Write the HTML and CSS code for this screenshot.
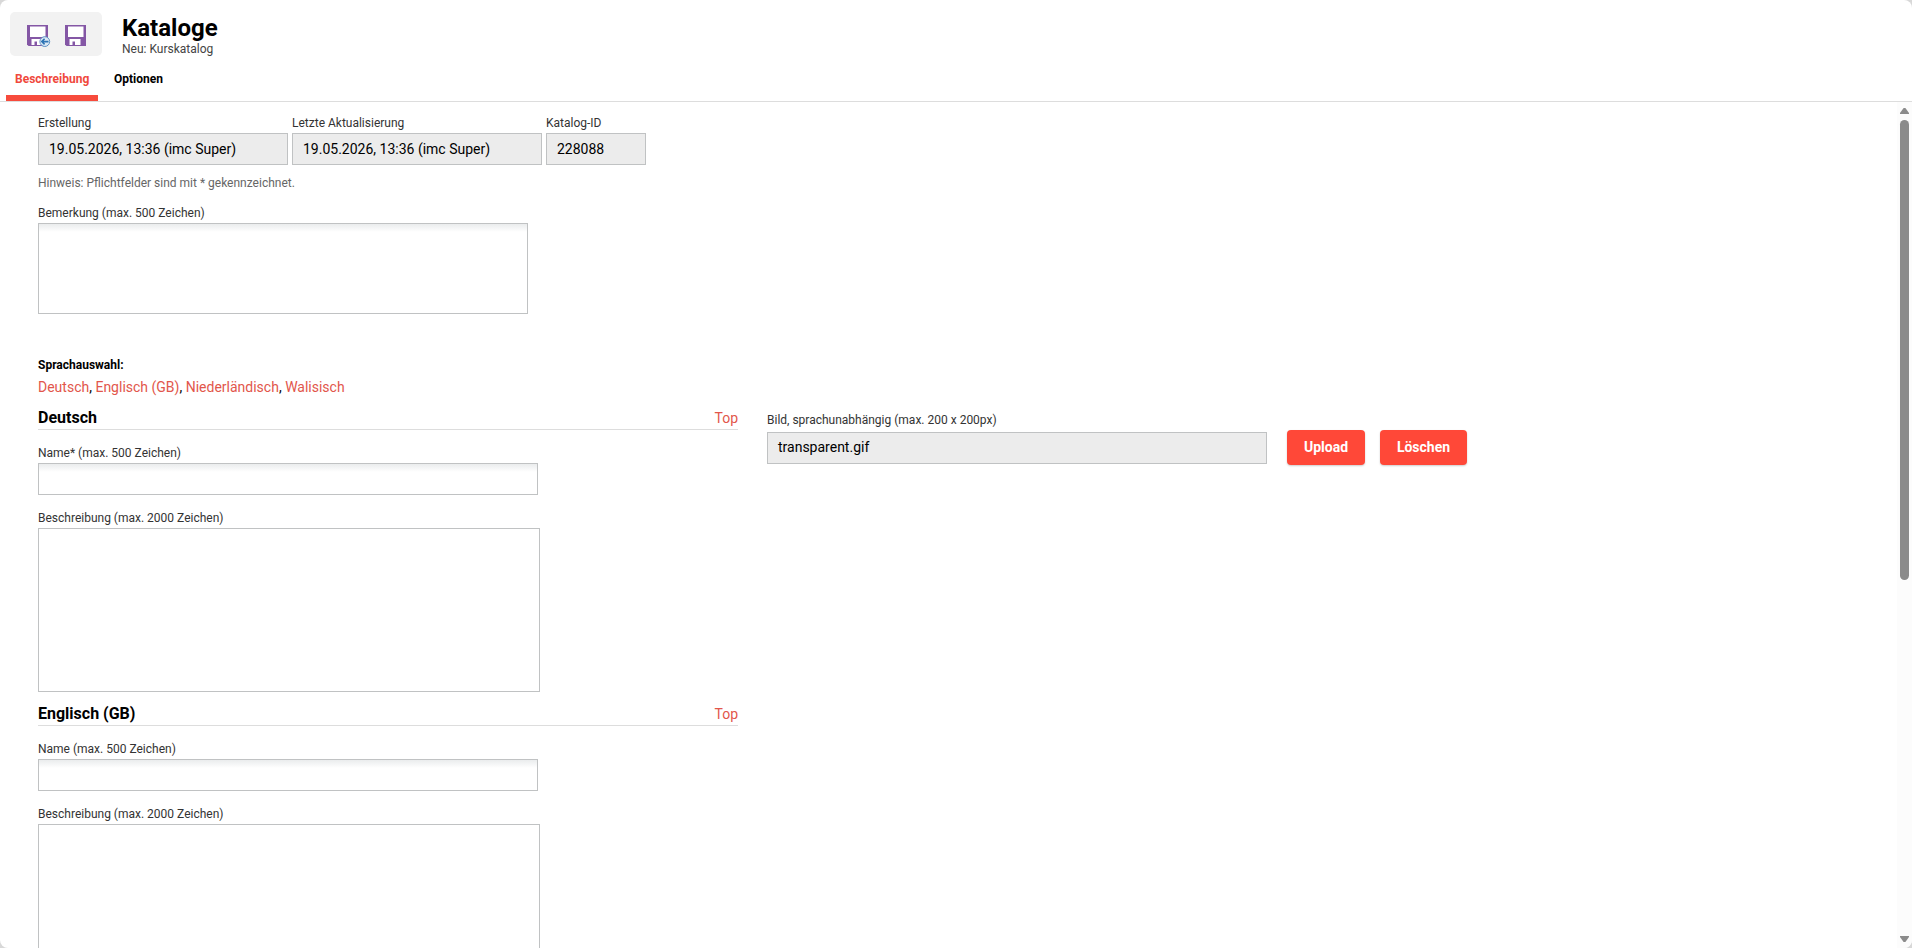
FILE: index.html
```
<!DOCTYPE html>
<html lang="de">
<head>
  <meta charset="utf-8">
  <title>Kataloge</title>
  <link rel="stylesheet" href="styles.css">
</head>

<body>
<div class="window">
  <header class="header">
    <div class="toolbar">
      <svg class="icon" width="25" height="24" viewBox="0 0 25 24">
        <path fill="#8457a5" d="M0 0H21V21H1.5L0 19.5Z"/>
        <path fill="#fff" d="M3 1.5H18.5V12H3ZM4.5 14H15V20H10V16.5H7.5V20H4.5Z"/>
        <circle cx="17.8" cy="16.6" r="4.9" fill="#dbe8f4" stroke="#5f94c6"/>
        <path fill="none" stroke="#2f75b5" stroke-width="1.6" d="M21.5 16.6H15M17.6 13.8L14.8 16.6L17.6 19.4"/>
      </svg>
      <svg class="icon" width="21" height="24" viewBox="0 0 21 24">
        <path fill="#8457a5" d="M0 0H21V21H1.5L0 19.5Z"/>
        <path fill="#fff" d="M3 1.5H18.5V12H3ZM4.5 14H15.5V20H10V16.5H7.5V20H4.5Z"/>
      </svg>
    </div>
    <div>
      <h1>Kataloge</h1>
      <p class="subtitle">Neu: Kurskatalog</p>
    </div>
  </header>

  <nav class="tabs">
    <a class="tab active">Beschreibung</a>
    <a class="tab">Optionen</a>
  </nav>

  <div class="main">
    <div class="content">
      <div class="row">
        <div class="field w250"><label>Erstellung</label><div class="input readonly">19.05.2026, 13:36 (imc Super)</div></div>
        <div class="field w250"><label>Letzte Aktualisierung</label><div class="input readonly">19.05.2026, 13:36 (imc Super)</div></div>
        <div class="field w100"><label>Katalog-ID</label><div class="input readonly">228088</div></div>
      </div>
      <p class="hint">Hinweis: Pflichtfelder sind mit * gekennzeichnet.</p>
      <div class="field remark"><label>Bemerkung (max. 500 Zeichen)</label><div class="input remark-text"></div></div>

      <p class="lang-title">Sprachauswahl:</p>
      <p class="langs"><a>Deutsch</a>, <a>Englisch (GB)</a>, <a>Niederländisch</a>, <a>Walisisch</a></p>

      <div class="columns">
        <div class="left">
          <section>
            <div class="section-head"><h2>Deutsch</h2><a>Top</a></div>
            <div class="field w500"><label>Name* (max. 500 Zeichen)</label><div class="input"></div></div>
            <div class="field description"><label>Beschreibung (max. 2000 Zeichen)</label><div class="textarea"></div></div>
          </section>
          <section>
            <div class="section-head"><h2>Englisch (GB)</h2><a>Top</a></div>
            <div class="field w500"><label>Name (max. 500 Zeichen)</label><div class="input"></div></div>
            <div class="field description"><label>Beschreibung (max. 2000 Zeichen)</label><div class="textarea"></div></div>
          </section>
        </div>
        <div class="right">
          <label>Bild, sprachunabhängig (max. 200 x 200px)</label>
          <div class="upload">
            <div class="input readonly file">transparent.gif</div>
            <button class="btn">Upload</button>
            <button class="btn delete">Löschen</button>
          </div>
        </div>
      </div>
    </div>

    <div class="scrollbar">
      <div class="arrow-up"></div>
      <div class="thumb"></div>
      <div class="arrow-down"></div>
    </div>
  </div>
</div>
</body>
</html>
```
FILE: styles.css
```
* {
  box-sizing: border-box;
}

body {
  margin: 0;
  background: #d8d8d8;
  font-family: Roboto, sans-serif;
  font-size: 14px;
  color: #000;
}

h1, h2, p {
  margin: 0;
}

a {
  color: #e2564b;
}

.window {
  display: flex;
  flex-direction: column;
  height: 948px;
  overflow: hidden;
  background: #fff;
  border-radius: 8px;
}

.header {
  display: flex;
  flex: none;
  height: 56px;
  padding: 12px 0 0 10px;
}

.toolbar {
  display: flex;
  gap: 13px;
  width: 92px;
  height: 44px;
  margin-right: 20px;
  padding: 13px 0 0 17px;
  background: #f2f2f2;
  border-radius: 5px;
}

.icon {
  flex: none;
}

h1 {
  margin-top: 2px;
  font-size: 24px;
  line-height: 28px;
}

.subtitle {
  font-size: 12px;
  line-height: 14px;
  color: #444;
}

.tabs {
  display: flex;
  flex: none;
  gap: 7px;
  height: 46px;
  padding: 14px 0 0 6px;
  border-bottom: 1px solid #ddd;
}

.tab {
  height: 31px;
  padding: 2px 9px 0;
  font-size: 12px;
  font-weight: bold;
  line-height: 14px;
  color: #000;
}

.tab.active {
  width: 92px;
  color: #f0483c;
  border-bottom: 6px solid #f74b3c;
}

.main {
  display: flex;
  flex: 1;
  min-height: 0;
}

.content {
  flex: 1;
  padding: 14px 0 0 38px;
  overflow: hidden;
}

.row {
  display: flex;
  gap: 4px;
}

label {
  display: block;
  height: 17px;
  font-size: 12px;
  line-height: 14px;
  color: #333;
}

.input {
  height: 32px;
  padding: 0 10px;
  border: 1px solid #c0c2c3;
  background: linear-gradient(#eaeced, #fff 8px);
  line-height: 30px;
}

.input.readonly {
  background: #ececec;
}

.w100 {
  width: 100px;
}

.w250 {
  width: 250px;
}

.w500 {
  width: 500px;
}

.hint {
  margin: 11px 0 16px;
  font-size: 12px;
  line-height: 14px;
  color: #666;
}

.remark {
  width: 490px;
}

.remark-text {
  height: 91px;
}

.lang-title {
  margin-top: 44px;
  font-size: 12px;
  font-weight: bold;
  line-height: 14px;
}

.langs {
  margin-top: 7px;
  line-height: 16px;
}

.columns {
  display: flex;
  gap: 29px;
  padding-top: 12px;
}

.left {
  width: 700px;
}

section {
  height: 296px;
}

.section-head {
  display: flex;
  justify-content: space-between;
  height: 23px;
  margin-bottom: 16px;
  border-bottom: 1px solid #ddd;
}

h2 {
  font-size: 16px;
  line-height: 22px;
}

.section-head a {
  line-height: 23px;
}

.description {
  width: 502px;
  margin-top: 16px;
}

.textarea {
  height: 164px;
  border: 1px solid #c0c2c3;
}

.right {
  padding-top: 6px;
}

.upload {
  display: flex;
}

.file {
  width: 500px;
  margin: 2px 20px 0 0;
  line-height: 28px;
}

.btn {
  width: 78px;
  height: 35px;
  margin-right: 15px;
  padding: 0 0 1px;
  border: 0;
  border-radius: 4px;
  background: #ff4838;
  box-shadow: 0 1px 2px rgba(0, 0, 0, 0.2);
  color: #fff;
  font-family: inherit;
  font-size: 14px;
  font-weight: bold;
}

.btn.delete {
  width: 87px;
}

/* scrollbar */
.scrollbar {
  display: flex;
  flex-direction: column;
  align-items: center;
  width: 15px;
  padding: 6px 0;
  background: #fcfcfc;
}

.arrow-up, .arrow-down {
  width: 9px;
  height: 6px;
  background: #8b8b8b;
  clip-path: polygon(40% 0, 60% 0, 100% 85%, 100% 100%, 0 100%, 0 85%);
}

.arrow-down {
  margin-top: auto;
  transform: rotate(180deg);
}

.thumb {
  width: 9px;
  height: 460px;
  margin-top: 6px;
  border-radius: 5px;
  background: #8b8b8b;
}
```
